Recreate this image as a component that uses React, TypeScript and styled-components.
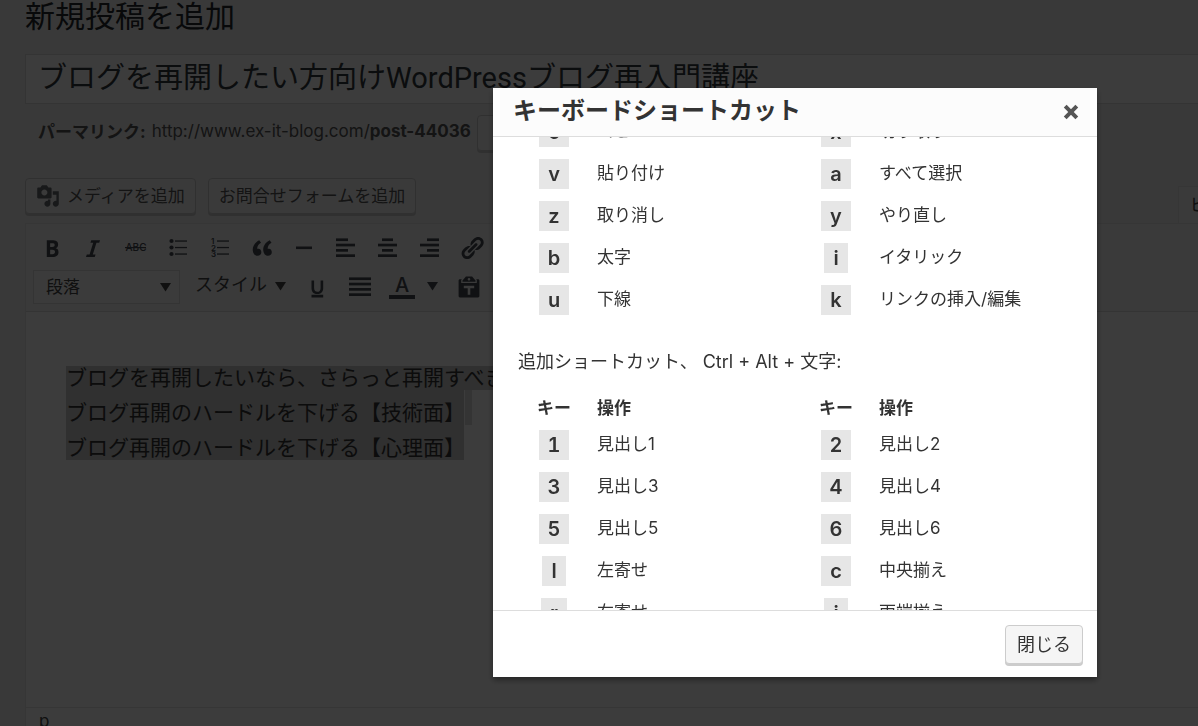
import React, { useLayoutEffect, useRef } from "react";
import styled, { createGlobalStyle } from "styled-components";

const GlobalStyle = createGlobalStyle`
  *, *::before, *::after { box-sizing: border-box; }
  body {
    margin: 0;
    overflow: hidden;
    background: #f1f1f1;
    color: #444;
    font-family: Inter, "Noto Sans CJK JP", sans-serif;
    font-size: 17px;
  }
  button, input, select { font: inherit; color: inherit; }
`;

const Page = styled.main`
  height: 100vh;
  overflow: hidden;
  padding-left: 25px;
`;

const PageTitle = styled.h1`
  margin: 0;
  padding-bottom: 22px;
  font-size: 30px;
  font-weight: 400;
  line-height: 32px;
  color: #23282d;
`;

const TitleInput = styled.input`
  display: block;
  width: 100%;
  height: 50px;
  padding: 0 12px 8px;
  border: 1px solid #ddd;
  border-right: 0;
  background: #fff;
  font-family: Roboto, "Noto Sans CJK JP", sans-serif;
  font-size: 29px;
  line-height: 40px;
  color: #32373c;
`;

const Permalink = styled.div`
  display: flex;
  align-items: center;
  gap: 6px;
  height: 36px;
  margin: 11px 0 27px 13px;
  color: #555;
  white-space: nowrap;
`;

const PermalinkUrl = styled.a`
  padding-bottom: 4px;
  color: inherit;
  text-decoration: none;
`;

const PermalinkLabel = styled.strong`
  padding-bottom: 6px;
`;

const Button = styled.button`
  display: flex;
  align-items: center;
  gap: 7px;
  height: 36px;
  padding: 0 10px;
  border: 1px solid #ccc;
  border-radius: 4px;
  background: #f7f7f7;
  box-shadow: 0 2px 0 #ccc;
  line-height: 32px;
  color: #555;
  white-space: nowrap;
`;

const EditButton = styled(Button)`
  padding: 0 16px;
`;

const CloseButton = styled(Button)`
  height: 39px;
  padding: 0 11px;
  background: #f5f5f5;
  font-size: 18px;
  color: #333;
`;

const MediaRow = styled.div`
  display: flex;
  gap: 12px;
  height: 45px;

  svg { color: #666b70; }
`;

const EditorTab = styled.button`
  width: 20px;
  height: 37px;
  margin: 8px 0 0 auto;
  padding: 0 0 4px 11px;
  border: 1px solid #e5e5e5;
  border-width: 1px 0 0 1px;
  background: #f5f5f5;
  text-align: left;
  white-space: nowrap;
  overflow: hidden;
`;

const Editor = styled.section`
  border: 1px solid #e5e5e5;
  border-right: 0;
  background: #fff;
`;

const Toolbar = styled.div`
  padding: 4px 7px 5px;
  border-bottom: 1px solid #ddd;
  background: #f5f5f5;
`;

const ToolRow = styled.div`
  display: flex;
  align-items: center;
  height: 39px;
`;

const ToolButton = styled.button<{ $width?: number }>`
  display: flex;
  flex: none;
  align-items: center;
  justify-content: center;
  width: ${(p) => p.$width ?? 42}px;
  height: 36px;
  padding: 0;
  border: 0;
  background: none;
  color: #454b52;
`;

const FormatField = styled.label`
  position: relative;
  display: block;
  flex: none;
  width: 147px;
  margin-right: 15px;

  svg {
    position: absolute;
    top: 13px;
    right: 9px;
  }
`;

const FormatSelect = styled.select`
  display: block;
  width: 100%;
  height: 34px;
  padding: 0 12px;
  border: 1px solid #ddd;
  appearance: none;
  background: #fbfbfb;
`;

const StyleButton = styled.button`
  display: flex;
  flex: none;
  align-items: center;
  gap: 8px;
  width: 102px;
  padding: 0;
  border: 0;
  background: none;
  font-size: 18px;
  line-height: 24px;
  white-space: nowrap;
`;

const StyleText = styled.span`
  padding-bottom: 4px;
`;

const Content = styled.div`
  height: 395px;
  padding: 54px 40px 0;
  font-size: 21px;
  line-height: 24px;
  color: #333;
`;

const Selection = styled.div`
  width: 398px;
  background: #cacaca;
`;

const Line = styled.p<{ $first?: boolean; $tail?: boolean }>`
  position: relative;
  display: flex;
  align-items: flex-end;
  width: ${(p) => (p.$first ? "max-content" : "auto")};
  height: ${(p) => (p.$first ? 24 : 35)}px;
  margin: 0;
  background: #cacaca;
  white-space: nowrap;

  &::after {
    content: "";
    display: ${(p) => (p.$tail ? "block" : "none")};
    position: absolute;
    top: 0;
    left: 100%;
    width: 7px;
    height: 100%;
    margin-left: 1px;
    background: #dcdcdc;
  }
`;

const StatusBar = styled.div`
  height: 34px;
  padding: 0 13px;
  border-top: 1px solid #e5e5e5;
  line-height: 26px;
`;

const Overlay = styled.div`
  position: fixed;
  inset: 0;
  display: flex;
  justify-content: flex-end;
  padding: 88px 101px 49px 24px;
  background: rgba(0, 0, 0, 0.765);
`;

const Dialog = styled.div`
  display: flex;
  flex-direction: column;
  width: 604px;
  max-width: 100%;
  background: #fff;
  box-shadow: 0 3px 6px rgba(0, 0, 0, 0.4);
  color: #333;
`;

const DialogHeader = styled.header`
  display: flex;
  flex: none;
  align-items: center;
  justify-content: space-between;
  height: 49px;
  padding: 0 18px 0 20px;
  border-bottom: 1px solid #ddd;
  background: #fcfcfc;
`;

const DialogTitle = styled.h2`
  margin: 0;
  padding-bottom: 2px;
  font-size: 24px;
  font-weight: 700;
  line-height: 32px;
`;

const IconButton = styled.button`
  display: flex;
  padding: 0;
  border: 0;
  background: none;
  color: #555;
`;

const DialogBody = styled.div`
  flex: 1;
  min-height: 0;
  overflow-y: auto;
  scrollbar-width: none;
  padding: 0 15px 0 25px;
`;

const DialogFooter = styled.footer`
  display: flex;
  flex: none;
  justify-content: flex-end;
  height: 67px;
  padding: 14px;
  border-top: 1px solid #ddd;
`;

const Table = styled.table`
  width: 100%;
  border-collapse: collapse;
  table-layout: fixed;

  th, td { padding: 0; }
`;

const KeyColumn = styled.col`
  width: 72px;
`;

const HeadRow = styled.tr`
  height: 32px;
  line-height: 24px;
`;

const KeyHeading = styled.th`
  text-align: center;
`;

const ActionHeading = styled.th`
  && { padding-left: 7px; }
  text-align: left;
`;

const Row = styled.tr`
  height: 42px;
`;

const KeyCell = styled.td`
  text-align: center;
`;

const Key = styled.kbd`
  display: inline-block;
  height: 30px;
  padding: 0 9px;
  background: #e6e6e6;
  font-family: Inter, sans-serif;
  font-size: 20px;
  font-variant-numeric: tabular-nums;
  font-weight: 600;
  line-height: 30px;
  vertical-align: middle;
`;

const ActionCell = styled.td`
  && { padding: 0 0 3px 7px; }
  line-height: 24px;
`;

const Description = styled.p`
  margin: 26px 0 15px;
  font-size: 18px;
  line-height: 30px;
`;

function Dashicon({ d, size = 26 }: { d: string; size?: number }) {
  return (
    <svg width={size} height={size} viewBox="0 0 20 20" fill="currentColor" aria-hidden="true">
      <path d={d} />
    </svg>
  );
}

const paths = {
  media:
    "M13 11V4c0-.55-.45-1-1-1h-1.67L9 1H5L3.67 3H2c-.55 0-1 .45-1 1v7c0 .55.45 1 1 1h10c.55 0 1-.45 1-1zM7 4.5c1.38 0 2.5 1.12 2.5 2.5S8.38 9.5 7 9.5 4.5 8.38 4.5 7 5.62 4.5 7 4.5zM14 6h5v10.5c0 1.38-1.12 2.5-2.5 2.5S14 17.88 14 16.5s1.12-2.5 2.5-2.5c.17 0 .34.02.5.05V9h-3V6zm-4 8.05V13h2v3.5c0 1.38-1.12 2.5-2.5 2.5S7 17.88 7 16.5 8.12 14 9.5 14c.17 0 .34.02.5.05z",
  bold:
    "M6 4v13h4.54c1.37 0 2.46-.33 3.26-1 .8-.66 1.2-1.58 1.2-2.77 0-.84-.17-1.51-.51-2.01s-.9-.85-1.67-1.03v-.09c.57-.1 1.02-.4 1.36-.9s.51-1.13.51-1.91c0-1.14-.39-1.98-1.17-2.5C12.75 4.26 11.5 4 9.78 4H6zm2.57 5.15V6.26h1.36c.73 0 1.27.11 1.61.32.34.22.51.58.51 1.07 0 .54-.16.92-.47 1.15s-.82.35-1.51.35h-1.5zm0 2.19h1.6c1.44 0 2.16.53 2.16 1.61 0 .6-.17 1.05-.51 1.34s-.86.43-1.57.43H8.57v-3.38z",
  italic: "M14.78 6h-2.13l-2.8 9h2.12l-.62 2H4.6l.62-2h2.14l2.8-9H8.03l.62-2h6.75z",
  quote:
    "M9.49 13.22c0-.74-.2-1.38-.61-1.9-.62-.78-1.83-.88-2.53-.72-.29-1.65 1.11-3.75 2.92-4.65L7.88 4c-2.73 1.3-5.42 4.28-4.96 8.05C3.21 14.43 4.59 16 6.54 16c.85 0 1.56-.25 2.12-.75s.83-1.18.83-2.03zm8.05 0c0-.74-.2-1.38-.61-1.9-.63-.78-1.83-.88-2.53-.72-.29-1.65 1.11-3.75 2.92-4.65L15.93 4c-2.73 1.3-5.41 4.28-4.95 8.05.29 2.38 1.66 3.95 3.61 3.95.85 0 1.56-.25 2.12-.75s.83-1.18.83-2.03z",
  link:
    "M17.74 2.76c1.68 1.69 1.68 4.41 0 6.1l-1.53 1.52c-1.12 1.12-2.7 1.47-4.14 1.09l2.62-2.61.76-.77.76-.76c.84-.84.84-2.2 0-3.04-.84-.85-2.2-.85-3.04 0l-.77.76-3.38 3.38c-.37-1.44-.02-3.02 1.1-4.14l1.52-1.53c1.69-1.68 4.42-1.68 6.1 0zM8.59 13.43l5.34-5.34c.42-.42.42-1.1 0-1.52-.44-.43-1.13-.39-1.53 0l-5.33 5.34c-.42.42-.42 1.1 0 1.52.44.43 1.13.39 1.52 0zm-.76 2.29l4.14-4.15c.38 1.44.03 3.02-1.09 4.14l-1.52 1.53c-1.69 1.68-4.41 1.68-6.1 0-1.68-1.68-1.68-4.42 0-6.1l1.53-1.52c1.12-1.12 2.7-1.47 4.14-1.1l-4.14 4.15c-.85.84-.85 2.2 0 3.05.84.84 2.2.84 3.04 0z",
  underline:
    "M14 5h-2v5.71c0 1.99-1.12 2.98-2.45 2.98-1.32 0-2.55-1-2.55-2.96V5H5v5.87c0 1.91 1 4.54 4.48 4.54 3.49 0 4.52-2.58 4.52-4.5V5zm0 13v-2H5v2h9z",
  paste:
    "M12.38 2L15 5v1H5V5l2.64-3h4.74zM10 5c.55 0 1-.44 1-1 0-.55-.45-1-1-1s-1 .45-1 1c0 .56.45 1 1 1zm5.45-1H17c.55 0 1 .45 1 1v12c0 .56-.45 1-1 1H3c-.55 0-1-.44-1-1V5c0-.55.45-1 1-1h1.55L4 4.63V7h12V4.63zM14 11V9H6v2h3v5h2v-5h3z",
};

/* Four horizontal bars; each entry is [x, width] on a 26px grid. */
function Bars({ rows }: { rows: [number, number][] }) {
  return (
    <svg width="26" height="26" viewBox="0 0 26 26" fill="currentColor" aria-hidden="true">
      {rows.map(([x, w], i) => (
        <rect key={i} x={x} y={3.4 + i * 5.3} width={w} height="2.7" />
      ))}
    </svg>
  );
}

function ListIcon({ numbered = false }: { numbered?: boolean }) {
  return (
    <svg width="26" height="26" viewBox="0 0 26 26" fill="currentColor" aria-hidden="true">
      {[6, 12.5, 19].map((y, i) => (
        <React.Fragment key={y}>
          {numbered ? (
            <text x="4" y={y + 3} fontSize="8" fontWeight="600">{i + 1}</text>
          ) : (
            <circle cx="6.5" cy={y} r="2.1" />
          )}
          <rect x="10" y={y - 0.6} width="12" height="1.3" />
        </React.Fragment>
      ))}
    </svg>
  );
}

function StrikeIcon() {
  return (
    <svg width="26" height="26" viewBox="0 0 26 26" fill="currentColor" aria-hidden="true">
      <text x="13" y="16" fontSize="10" fontWeight="500" textAnchor="middle">ABC</text>
      <rect x="2" y="12" width="21" height="1.2" />
    </svg>
  );
}

function Caret() {
  return (
    <svg width="11" height="9" viewBox="0 0 11 9" fill="currentColor" aria-hidden="true">
      <path d="M0 0h11L5.5 8.5z" />
    </svg>
  );
}

function TextColorIcon() {
  return (
    <svg width="28" height="28" viewBox="0 0 28 28" fill="currentColor" aria-hidden="true">
      <text x="14" y="19" fontSize="20" fontWeight="500" textAnchor="middle">A</text>
      <rect x="1" y="22" width="26" height="4" />
    </svg>
  );
}

function CloseIcon() {
  return (
    <svg width="16" height="16" viewBox="0 0 16 16" stroke="currentColor" strokeWidth="4" aria-hidden="true">
      <path d="M2.2 2.2l11.6 11.6M13.8 2.2l-11.6 11.6" />
    </svg>
  );
}

type Shortcut = [string, string];

const defaultShortcuts: [Shortcut, Shortcut][] = [
  [["c", "コピー"], ["x", "切り取り"]],
  [["v", "貼り付け"], ["a", "すべて選択"]],
  [["z", "取り消し"], ["y", "やり直し"]],
  [["b", "太字"], ["i", "イタリック"]],
  [["u", "下線"], ["k", "リンクの挿入/編集"]],
];

const additionalShortcuts: [Shortcut, Shortcut][] = [
  [["1", "見出し1"], ["2", "見出し2"]],
  [["3", "見出し3"], ["4", "見出し4"]],
  [["5", "見出し5"], ["6", "見出し6"]],
  [["l", "左寄せ"], ["c", "中央揃え"]],
  [["r", "右寄せ"], ["j", "両端揃え"]],
];

function ShortcutTable({ rows, headed = false }: { rows: [Shortcut, Shortcut][]; headed?: boolean }) {
  return (
    <Table>
      <colgroup>
        <KeyColumn />
        <col />
        <KeyColumn />
        <col />
      </colgroup>
      {headed && (
        <thead>
          <HeadRow>
            <KeyHeading>キー</KeyHeading>
            <ActionHeading>操作</ActionHeading>
            <KeyHeading>キー</KeyHeading>
            <ActionHeading>操作</ActionHeading>
          </HeadRow>
        </thead>
      )}
      <tbody>
        {rows.map((pair, i) => (
          <Row key={i}>
            {pair.map(([key, action]) => (
              <React.Fragment key={key}>
                <KeyCell><Key>{key}</Key></KeyCell>
                <ActionCell>{action}</ActionCell>
              </React.Fragment>
            ))}
          </Row>
        ))}
      </tbody>
    </Table>
  );
}

function ShortcutDialog() {
  const body = useRef<HTMLDivElement>(null);

  useLayoutEffect(() => {
    if (body.current) body.current.scrollTop = 26;
  }, []);

  return (
    <Overlay>
      <Dialog role="dialog" aria-modal="true" aria-labelledby="shortcut-title">
        <DialogHeader>
          <DialogTitle id="shortcut-title">キーボードショートカット</DialogTitle>
          <IconButton aria-label="閉じる"><CloseIcon /></IconButton>
        </DialogHeader>
        <DialogBody ref={body}>
          <ShortcutTable rows={defaultShortcuts} />
          <Description>追加ショートカット、 Ctrl + Alt + 文字:</Description>
          <ShortcutTable rows={additionalShortcuts} headed />
        </DialogBody>
        <DialogFooter>
          <CloseButton>閉じる</CloseButton>
        </DialogFooter>
      </Dialog>
    </Overlay>
  );
}

export default function App() {
  return (
    <>
      <GlobalStyle />
      <Page>
        <PageTitle>新規投稿を追加</PageTitle>
        <TitleInput aria-label="タイトル" defaultValue="ブログを再開したい方向けWordPressブログ再入門講座" />
        <Permalink>
          <PermalinkLabel>パーマリンク:</PermalinkLabel>
          <PermalinkUrl href="#permalink">http://www.ex-it-blog.com/<b>post-44036</b></PermalinkUrl>
          <EditButton>編集</EditButton>
        </Permalink>
        <MediaRow>
          <Button><Dashicon d={paths.media} size={24} />メディアを追加</Button>
          <Button>お問合せフォームを追加</Button>
          <EditorTab>ビジュアル</EditorTab>
        </MediaRow>
        <Editor>
          <Toolbar>
            <ToolRow>
              <ToolButton $width={38} aria-label="太字"><Dashicon d={paths.bold} /></ToolButton>
              <ToolButton $width={44} aria-label="イタリック"><Dashicon d={paths.italic} /></ToolButton>
              <ToolButton aria-label="打ち消し"><StrikeIcon /></ToolButton>
              <ToolButton aria-label="番号なしリスト"><ListIcon /></ToolButton>
              <ToolButton aria-label="番号付きリスト"><ListIcon numbered /></ToolButton>
              <ToolButton aria-label="引用"><Dashicon d={paths.quote} /></ToolButton>
              <ToolButton aria-label="横ライン">
                <svg width="26" height="26" viewBox="0 0 26 26" fill="currentColor"><rect x="5" y="11.5" width="16" height="2.6" /></svg>
              </ToolButton>
              <ToolButton aria-label="左寄せ"><Bars rows={[[3, 12], [3, 19], [3, 12], [3, 19]]} /></ToolButton>
              <ToolButton aria-label="中央揃え"><Bars rows={[[7, 11], [3, 19], [7, 11], [3, 19]]} /></ToolButton>
              <ToolButton aria-label="右寄せ"><Bars rows={[[10, 12], [3, 19], [10, 12], [3, 19]]} /></ToolButton>
              <ToolButton aria-label="リンク"><Dashicon d={paths.link} /></ToolButton>
            </ToolRow>
            <ToolRow>
              <FormatField>
                <FormatSelect aria-label="書式" defaultValue="p">
                  <option value="p">段落</option>
                </FormatSelect>
                <Caret />
              </FormatField>
              <StyleButton><StyleText>スタイル</StyleText><Caret /></StyleButton>
              <ToolButton aria-label="下線"><Dashicon d={paths.underline} /></ToolButton>
              <ToolButton aria-label="両端揃え"><Bars rows={[[2, 22], [2, 22], [2, 22], [2, 22]]} /></ToolButton>
              <ToolButton aria-label="テキスト色"><TextColorIcon /></ToolButton>
              <ToolButton $width={18} aria-label="色を選択"><Caret /></ToolButton>
              <ToolButton $width={56} aria-label="テキストとしてペースト"><Dashicon d={paths.paste} /></ToolButton>
            </ToolRow>
          </Toolbar>
          <Content>
            <Selection>
              <Line $first>ブログを再開したいなら、さらっと再開すべき</Line>
              <Line $tail>ブログ再開のハードルを下げる【技術面】</Line>
              <Line>ブログ再開のハードルを下げる【心理面】</Line>
            </Selection>
          </Content>
          <StatusBar>p</StatusBar>
        </Editor>
      </Page>
      <ShortcutDialog />
    </>
  );
}
